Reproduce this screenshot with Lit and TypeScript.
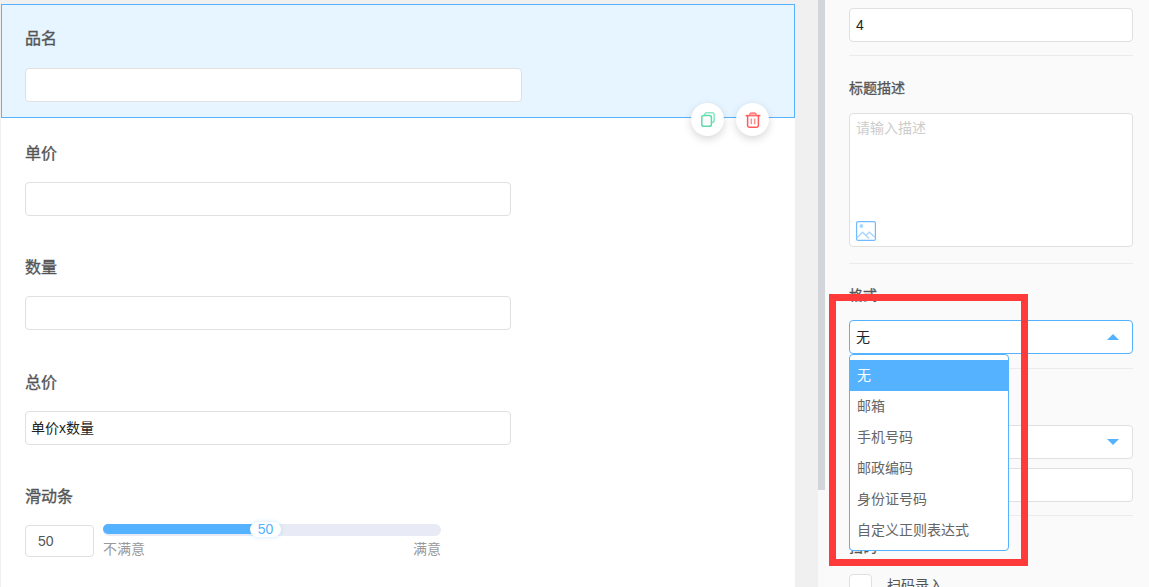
import { LitElement, html, css, svg } from "lit";
import { customElement } from "lit/decorators.js";

const copyIcon = svg`<svg width="14" height="15" viewBox="0 0 14 15" fill="none" stroke-width="1.5"><path d="M3.8 3.4V2.6A1.8 1.8 0 0 1 5.6.8h5.8a1.8 1.8 0 0 1 1.8 1.8v6a1.8 1.8 0 0 1-1.8 1.8h-.6" stroke="#8ce6c4"/><rect x=".8" y="3.6" width="9.6" height="10.6" rx="1.8" stroke="#5fd9a9"/></svg>`;
const trashIcon = svg`<svg width="16" height="16" viewBox="0 0 16 16" fill="none" stroke-width="1.5"><path d="M.6 3.6h14.8" stroke="#ff5a5a"/><path d="M4.8 3.2C4.8 1.8 5.6 1 6.6 1h2.8c1 0 1.8.8 1.8 2.2" stroke="#ff8080" fill="#ffb0b0"/><path d="M2.6 3.8v9.6a1.8 1.8 0 0 0 1.8 1.8h7.2a1.8 1.8 0 0 0 1.8-1.8V3.8" stroke="#ff5a5a"/><path d="M6.3 6.4v5.8M9.7 6.4v5.8" stroke="#ff9090"/></svg>`;
const imgIcon = svg`<svg width="20" height="20" viewBox="0 0 20 20" fill="none"><rect x=".6" y=".6" width="18.8" height="18.8" rx="1.5" stroke="#6ebcff" stroke-width="1.2"/><circle cx="5.4" cy="5" r="1.9" fill="#a9d7fd"/><path d="M.8 17 L6.6 11.2 L13 17.6 M10 14.2 L13.4 11.2 L19.2 16.6" stroke="#a9d7fd" stroke-width="1.4"/></svg>`;

@customElement("app-root")
export class AppRoot extends LitElement {
  static styles = css`
    :host {
      display: flex;
      width: 1149px;
      height: 587px;
      overflow: hidden;
      background: #f0f0f0;
      font-family: "Liberation Sans", "Noto Sans CJK SC", sans-serif;
    }
    .left { width: 795px; flex: none; padding: 4px 0 0 1px; box-sizing: border-box; position: relative; }
    .canvas { background: #fff; height: 583px; }
    .field { height: 114px; padding: 23px 0 0 24px; box-sizing: border-box; position: relative; }
    .field.tall { height: 115px; }
    .field.active {
      padding-top: 22px;
      background: #e6f5ff;
      outline: 1px solid #55b2fe;
      outline-offset: -1px;
    }
    .title { font-size: 16px; font-weight: 400; -webkit-text-stroke: 0.35px #555; color: #555; line-height: 26px; height: 26px; }
    .input {
      margin-top: 15px;
      width: 486px;
      height: 34px;
      box-sizing: border-box;
      background: #fff;
      border: 1px solid #e0e0e0;
      border-radius: 4px;
      font-size: 14px;
      line-height: 32px;
      color: #222;
      padding-left: 5px;
    }
    .field.active .input { width: 497px; margin-top: 16px; }
    .actions { position: absolute; top: 99px; left: 690px; display: flex; gap: 12px; z-index: 2; }
    .circle {
      width: 33px; height: 33px; border-radius: 50%; background: #fff;
      box-shadow: 0 3px 8px rgba(0,0,0,.16);
      display: flex; align-items: center; justify-content: center;
    }
    .slider-row { display: flex; margin-top: 15px; gap: 9px; }
    .num {
      width: 69px; height: 32px; box-sizing: border-box; border: 1px solid #e0e0e0; border-radius: 4px;
      font-size: 14px; line-height: 30px; color: #555; padding-left: 12px;
    }
    .slider { width: 338px; position: relative; }
    .track { height: 12px; margin-top: -1px; background: #e8ebf5; border-radius: 6px; position: relative; }
    .fill { position: absolute; left: 0; top: 0; bottom: 2px; width: 150px; background: #55b2fe; border-radius: 5px 0 0 5px; }
    .thumb {
      position: absolute; left: 147px; top: -2px; width: 31px; height: 15px; border-radius: 8px;
      background: #fff; box-shadow: 0 0 4px rgba(85,178,254,.3);
      color: #55b2fe; font-size: 14px; line-height: 15px; text-align: center;
    }
    .scale { display: flex; justify-content: space-between; font-size: 14px; color: #999; line-height: 16px; margin-top: 5px; }

    .gutter { width: 23px; flex: none; background: #f0f0f0; }
    .scrollbar { width: 7px; flex: none; background: #f9f9f9; }
    .thumbbar { height: 490px; background: #d2d5d9; }
    .right {
      width: 324px; flex: none; background: #fafafa; padding: 0 16px 0 24px; box-sizing: border-box; position: relative;
    }
    .rinput {
      width: 284px; height: 34px; box-sizing: border-box; background: #fff; border: 1px solid #e0e0e0; border-radius: 4px;
      font-size: 14px; line-height: 32px; color: #222; padding-left: 6px; position: relative;
    }
    .hr { height: 1px; background: #ebebeb; width: 284px; }
    .rtitle { font-size: 14px; font-weight: 400; -webkit-text-stroke: 0.3px #555; color: #555; line-height: 20px; height: 20px; }
    .textarea {
      width: 284px; height: 134px; box-sizing: border-box; background: #fff; border: 1px solid #e0e0e0; border-radius: 4px;
      position: relative; font-size: 14px; color: #ccc; padding: 4px 6px; line-height: 20px;
    }
    .textarea svg { position: absolute; left: 6px; bottom: 5px; display: block; }
    .open { border-color: #55b2fe; }
    .caret { position: absolute; right: 13px; top: 13px; width: 0; height: 0; border: 6px solid transparent; border-top-width: 0; border-bottom: 6px solid #55b2fe; }
    .caret.down { border-bottom: 0; border-top: 6px solid #55b2fe; }
    .check-row { display: flex; gap: 15px; align-items: flex-start; font-size: 14px; color: #555; line-height: 20px; }
    .check-label { margin-top: 1px; }
    .checkbox { width: 23px; height: 23px; box-sizing: border-box; border: 1px solid #e0e0e0; border-radius: 4px; background: #fff; flex: none; }

    .dropdown {
      position: absolute; left: 24px; top: 354px; width: 160px; height: 197px; box-sizing: border-box;
      background: #fff; border: 1px solid #55b2fe; border-radius: 4px; padding-top: 5px; z-index: 3;
      font-size: 14px; color: #666;
    }
    .opt { height: 31px; line-height: 30px; padding-left: 7px; white-space: nowrap; }
    .opt.sel { background: #55b2fe; color: #fff; }
    .mark {
      position: absolute; left: 4px; top: 294px; width: 199px; height: 272px; box-sizing: border-box;
      border: 7px solid #ff3a3a; z-index: 4;
    }
    .s8 { height: 8px; } .s9 { height: 9px; } .s13 { height: 13px; } .s14 { height: 14px; }
    .s15 { height: 15px; } .s16 { height: 16px; } .s17 { height: 17px; } .s21 { height: 21px; }
    .s22 { height: 22px; } .s56 { height: 56px; }
  `;

  private field(name: string, value = "", tall = false) {
    return html`<div class="field ${tall ? "tall" : ""}"><div class="title">${name}</div><div class="input">${value}</div></div>`;
  }

  render() {
    return html`
      <div class="left">
        <div class="canvas">
          <div class="field active">
            <div class="title">品名</div>
            <div class="input"></div>
            <div class="actions">
              <div class="circle">${copyIcon}</div>
              <div class="circle">${trashIcon}</div>
            </div>
          </div>
          ${this.field("单价")}
          ${this.field("数量", "", true)}
          ${this.field("总价", "单价x数量")}
          <div class="field">
            <div class="title">滑动条</div>
            <div class="slider-row">
              <div class="num">50</div>
              <div class="slider">
                <div class="track">
                  <div class="fill"></div>
                  <div class="thumb">50</div>
                </div>
                <div class="scale"><span>不满意</span><span>满意</span></div>
              </div>
            </div>
          </div>
        </div>
      </div>
      <div class="gutter"></div>
      <div class="scrollbar"><div class="thumbbar"></div></div>
      <div class="right">
        <div class="s8"></div>
        <div class="rinput">4</div>
        <div class="s13"></div>
        <div class="hr"></div>
        <div class="s22"></div>
        <div class="rtitle">标题描述</div>
        <div class="s15"></div>
        <div class="textarea">请输入描述${imgIcon}</div>
        <div class="s16"></div>
        <div class="hr"></div>
        <div class="s21"></div>
        <div class="rtitle">格式</div>
        <div class="s15"></div>
        <div class="rinput open">无<span class="caret"></span></div>
        <div class="s14"></div>
        <div class="hr"></div>
        <div class="s56"></div>
        <div class="rinput"><span class="caret down"></span></div>
        <div class="s9"></div>
        <div class="rinput"></div>
        <div class="s13"></div>
        <div class="hr"></div>
        <div class="s21"></div>
        <div class="rtitle">扫码</div>
        <div class="s17"></div>
        <div class="check-row"><span class="checkbox"></span><span class="check-label">扫码录入</span></div>
        <div class="dropdown">
          <div class="opt sel">无</div>
          <div class="opt">邮箱</div>
          <div class="opt">手机号码</div>
          <div class="opt">邮政编码</div>
          <div class="opt">身份证号码</div>
          <div class="opt">自定义正则表达式</div>
        </div>
        <div class="mark"></div>
      </div>
    `;
  }
}
